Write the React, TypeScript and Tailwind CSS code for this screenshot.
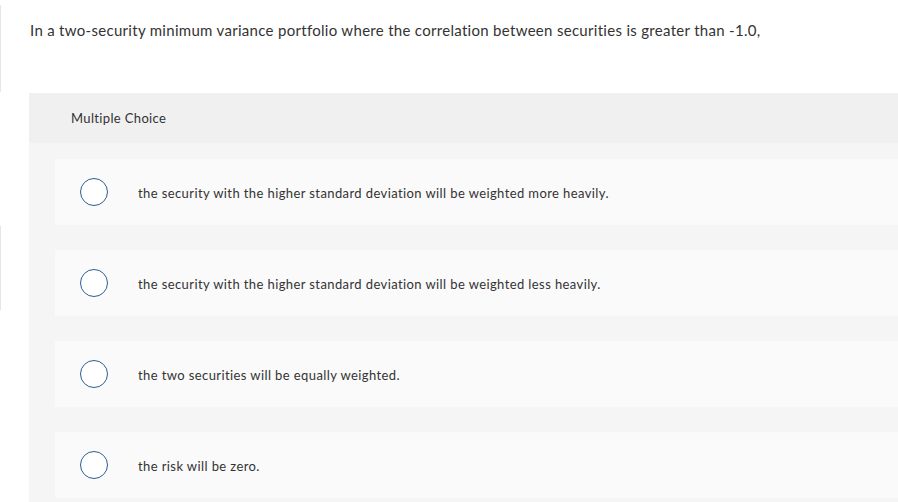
import React from "react";

const options = [
  "the security with the higher standard deviation will be weighted more heavily.",
  "the security with the higher standard deviation will be weighted less heavily.",
  "the two securities will be equally weighted.",
  "the risk will be zero.",
];

export default function App() {
  return (
    <div className="relative w-[898px] h-[502px] overflow-hidden bg-white text-[#333] font-['Lato','Liberation_Sans',sans-serif]">
      <div className="absolute left-0 top-[5px] w-px h-[87px] bg-[#e6e6e6]" />
      <div className="absolute left-0 top-[226px] w-px h-[84px] bg-[#e6e6e6]" />
      <div className="pt-[20px] pl-[30px] h-[93px] text-[15px] leading-[20px] tracking-[0.3px]">
        In a two-security minimum variance portfolio where the correlation between securities is greater than -1.0,
      </div>
      <div className="ml-[29px] bg-[#f5f5f5] h-[420px]">
        <div className="h-[50px] bg-[#f0f0f0] flex items-center pl-[42px] pt-[2px] text-[13px] tracking-[0.35px]">
          Multiple Choice
        </div>
        <div className="pt-[16px] pl-[26px] flex flex-col gap-[25px]">
          {options.map((o) => (
            <div key={o} className="h-[66px] bg-[#fafafa] flex items-center">
              <div className="ml-[25px] w-[28px] h-[28px] rounded-full border-[1.5px] border-[#2c5e93] bg-white shrink-0" />
              <div className="ml-[30px] pt-[3px] text-[13px] tracking-[0.4px]">{o}</div>
            </div>
          ))}
        </div>
      </div>
    </div>
  );
}
